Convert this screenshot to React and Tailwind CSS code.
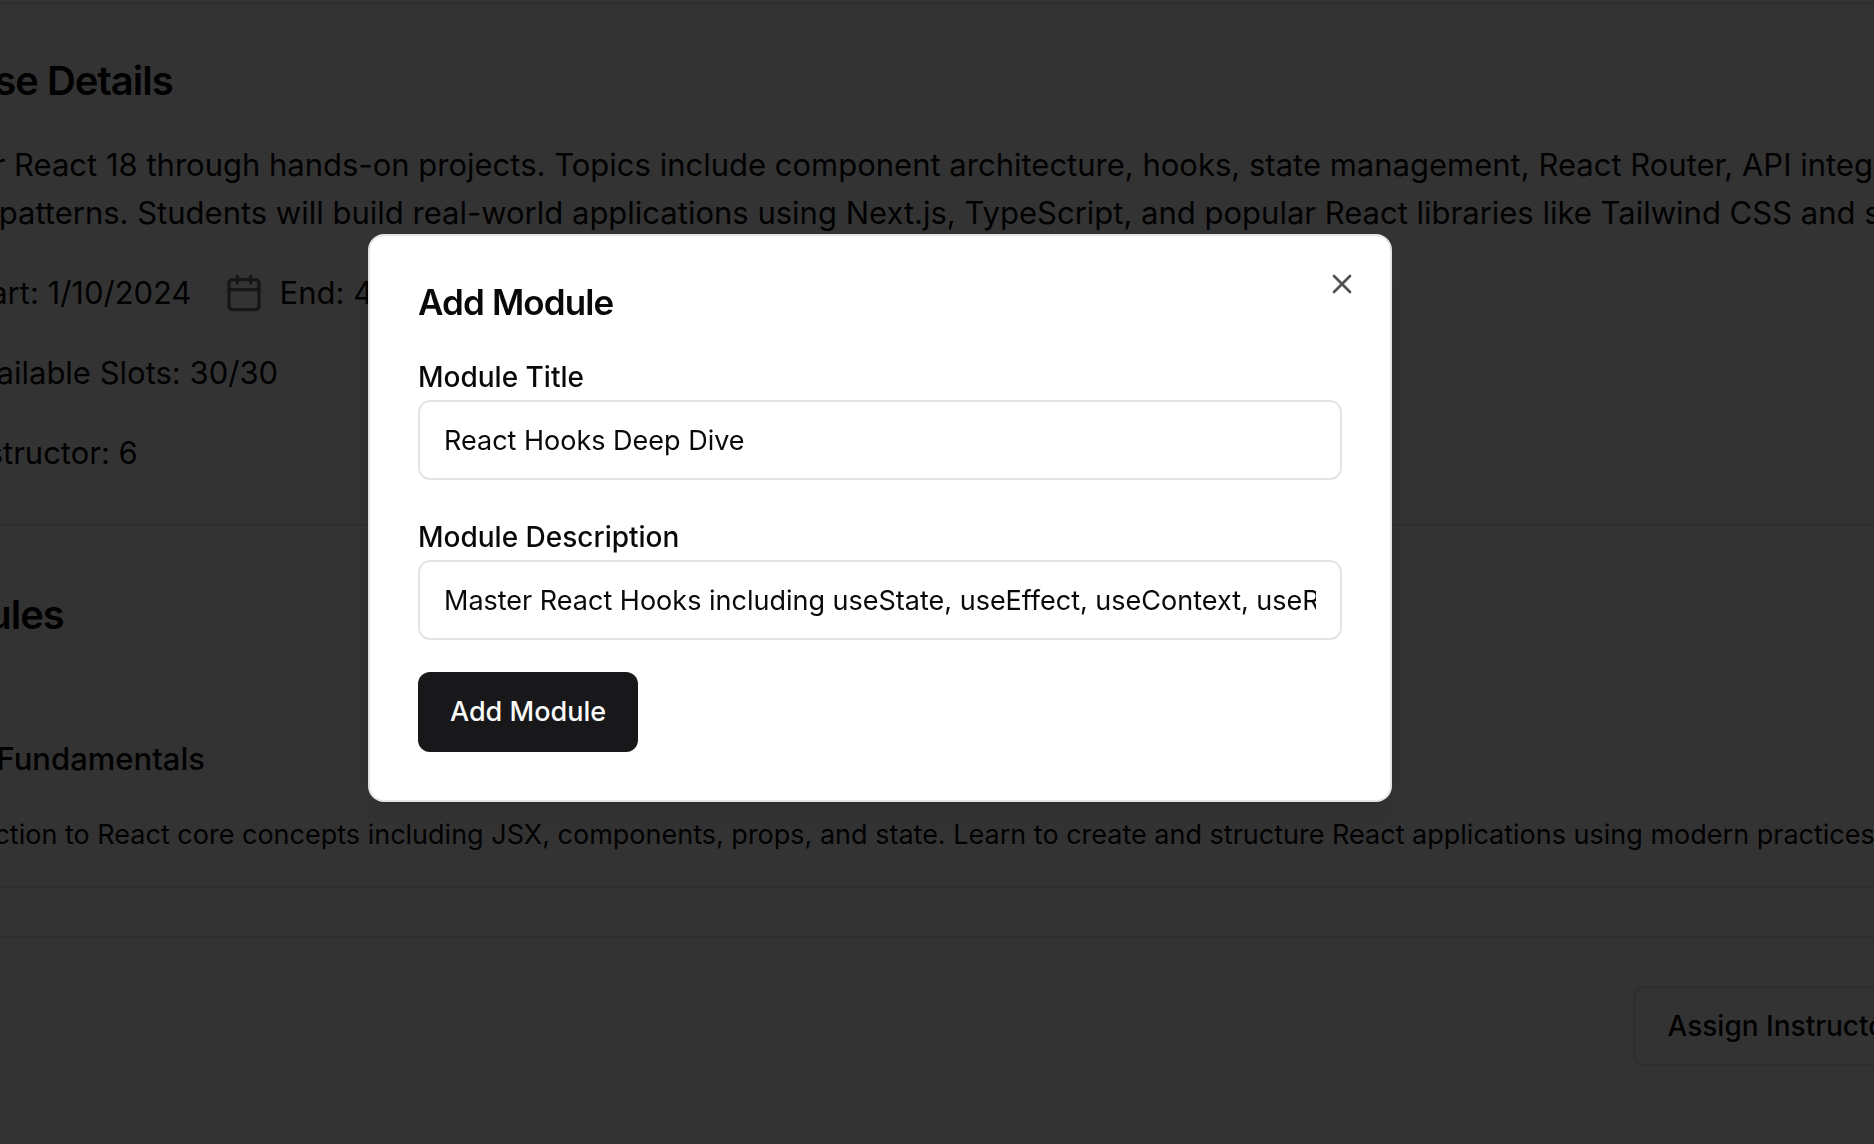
import { Calendar, Users, User, X } from "lucide-react";

function Detail({ icon: Icon, children }) {
  return (
    <span className="flex items-center gap-4">
      <Icon className="size-10 shrink-0 text-[#71717a]" strokeWidth={2} />
      <span>{children}</span>
    </span>
  );
}

function Field({ id, label, value }) {
  return (
    <div className="text-[32px] leading-[48px]">
      <label htmlFor={id} className="block pt-0.5 text-[28px] leading-[46px] font-medium">
        {label}
      </label>
      <input
        id={id}
        type="text"
        defaultValue={value}
        className="block h-20 w-full rounded-xl border-2 border-[#e4e4e4] bg-white px-6 text-[27px] outline-none"
      />
    </div>
  );
}

function CoursePage() {
  return (
    <main className="-mr-24 -ml-24 pt-0.5 whitespace-nowrap">
      <section className="flex flex-col gap-8 border-y-2 border-[#e4e4e7] pt-[49px] pb-[47px] text-[31px] leading-[48px]">
        <h2 className="text-[40px] leading-[56px] font-semibold tracking-tight">Course Details</h2>
        <p>
          Master React 18 through hands-on projects. Topics include component architecture, hooks, state management,
          React Router, API integration,
          <br />
          better patterns. Students will build real-world applications using Next.js, TypeScript, and popular React
          libraries like Tailwind CSS and shadcn.
        </p>
        <div className="flex gap-8">
          <Detail icon={Calendar}>Start: 1/10/2024</Detail>
          <Detail icon={Calendar}>End: 4/10/2024</Detail>
        </div>
        <Detail icon={Users}>Available Slots: 30/30</Detail>
        <Detail icon={User}>Instructor: 6</Detail>
      </section>

      <section className="border-b-2 border-[#e4e4e7] pt-[61px] pb-12">
        <h2 className="text-[40px] leading-[56px] font-semibold tracking-tight">Modules</h2>
        <article className="border-b-2 border-[#e4e4e7] pt-23 pb-[31px]">
          <h3 className="text-[31px] leading-[48px] font-medium">React Fundamentals</h3>
          <p className="mt-8 text-[27px] leading-[40px]">
            Introduction to React core concepts including JSX, components, props, and state. Learn to create and
            structure React applications using modern practices.
          </p>
        </article>
      </section>

      <footer className="flex justify-end py-12 pr-10">
        <button
          type="button"
          className="h-20 rounded-xl border-2 border-[#e4e4e7] bg-white px-8 text-[28px] font-medium"
        >
          Assign Instructor
        </button>
      </footer>
    </main>
  );
}

function AddModuleDialog() {
  return (
    <div className="fixed inset-0 flex items-center justify-center bg-black/80 pr-[114px] pb-[108px]">
      <div
        role="dialog"
        aria-modal="true"
        aria-labelledby="dialog-title"
        className="relative flex w-full max-w-5xl flex-col gap-8 rounded-2xl border-2 border-[#e4e4e4] bg-white p-12 shadow-[0_20px_30px_-6px_rgba(0,0,0,0.1),0_8px_12px_-8px_rgba(0,0,0,0.1)]"
      >
        <h2 id="dialog-title" className="text-[35px] leading-[36px] font-semibold tracking-tight">
          Add Module
        </h2>
        <form className="flex flex-col gap-8">
          <Field id="module-title" label="Module Title" value="React Hooks Deep Dive" />
          <Field
            id="module-description"
            label="Module Description"
            value="Master React Hooks including useState, useEffect, useContext, useReducer"
          />
          <button
            type="button"
            className="h-20 self-start rounded-xl bg-[#18181b] px-8 text-[27px] font-medium text-[#fafafa]"
          >
            Add Module
          </button>
        </form>
        <button type="button" aria-label="Close" className="absolute top-8 right-8 opacity-70">
          <X className="size-8" strokeWidth={2} />
        </button>
      </div>
    </div>
  );
}

export default function App() {
  return (
    <div className="min-h-screen overflow-hidden bg-white font-[Inter,sans-serif] text-[#09090b]">
      <CoursePage />
      <AddModuleDialog />
    </div>
  );
}
